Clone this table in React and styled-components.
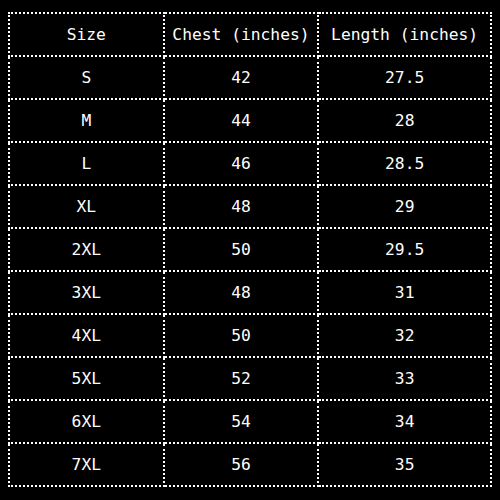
import React from "react";
import styled, { createGlobalStyle } from "styled-components";

const GlobalStyle = createGlobalStyle`
  html, body {
    margin: 0;
    padding: 0;
    background: #000;
  }
  body {
    padding: 12px 9px 0 8px;
  }
`;

const sizes = [
  { size: "S", chest: 42, length: "27.5" },
  { size: "M", chest: 44, length: "28" },
  { size: "L", chest: 46, length: "28.5" },
  { size: "XL", chest: 48, length: "29" },
  { size: "2XL", chest: 50, length: "29.5" },
  { size: "3XL", chest: 48, length: "31" },
  { size: "4XL", chest: 50, length: "32" },
  { size: "5XL", chest: 52, length: "33" },
  { size: "6XL", chest: 54, length: "34" },
  { size: "7XL", chest: 56, length: "35" },
];

const Table = styled.table`
  width: 484px;
  border-collapse: collapse;
  table-layout: fixed;
  color: #fff;
  font-family: "DejaVu Sans Mono", monospace;
  font-size: 16.3px;
  border: 2px dotted #fff;
`;

const Cell = styled.td`
  border: 2px dotted #fff;
  height: 43px;
  padding: 0;
  text-align: center;
  vertical-align: middle;
  box-sizing: border-box;
  font-weight: normal;
`;

const HeadCell = styled(Cell).attrs({ as: "th" })``;

export default function App() {
  return (
    <>
      <GlobalStyle />
      <Table>
        <colgroup>
          <col style={{ width: 154 }} />
          <col style={{ width: 154 }} />
          <col style={{ width: 172 }} />
        </colgroup>
        <thead>
          <tr>
            <HeadCell>Size</HeadCell>
            <HeadCell>Chest (inches)</HeadCell>
            <HeadCell>Length (inches)</HeadCell>
          </tr>
        </thead>
        <tbody>
          {sizes.map((row) => (
            <tr key={row.size}>
              <Cell>{row.size}</Cell>
              <Cell>{row.chest}</Cell>
              <Cell>{row.length}</Cell>
            </tr>
          ))}
        </tbody>
      </Table>
    </>
  );
}
